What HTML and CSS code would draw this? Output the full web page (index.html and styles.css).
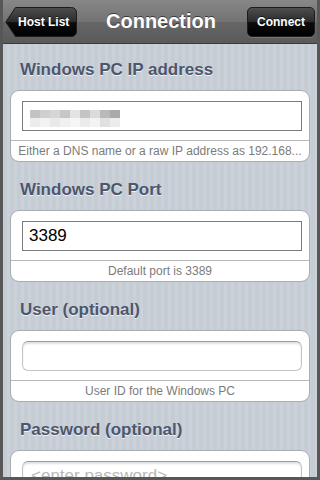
FILE: index.html
```html
<!DOCTYPE html>
<html lang="en">
<head>
  <meta charset="UTF-8" />
  <meta name="viewport" content="width=device-width, initial-scale=1.0"/>
  <title>Connection</title>
  <link rel="stylesheet" href="styles.css">
</head>
<body>

<div class="screen">
  <div class="app">

    <!-- Navigation bar -->
    <header class="navbar">
      <a class="nav-btn back" href="#">
        <svg class="back-shape" width="72" height="30" viewBox="0 0 72 30">
          <defs>
            <linearGradient id="gloss" x1="0" y1="0" x2="0" y2="1">
              <stop offset="0" stop-color="#4e4e4e"/>
              <stop offset="0.5" stop-color="#2b2b2b"/>
              <stop offset="0.52" stop-color="#0c0c0c"/>
              <stop offset="1" stop-color="#000"/>
            </linearGradient>
          </defs>
          <path d="M0.8 15 L10.5 0.5 H66.5 A5 5 0 0 1 71.5 5.5 V24.5 A5 5 0 0 1 66.5 29.5 H10.5 Z"
                fill="url(#gloss)" stroke="#1c1c1c" stroke-width="1"/>
        </svg>
        <span>Host List</span>
      </a>
      <h1>Connection</h1>
      <a class="nav-btn connect" href="#">Connect</a>
    </header>

    <main class="form">

      <!-- IP address -->
      <section class="group">
        <h2>Windows PC IP address</h2>
        <div class="card">
          <div class="field-row">
            <div class="field square">
              <div class="blur">
                <i class="c1"></i><i class="c2"></i><i class="c3"></i><i class="c4"></i><i class="c5"></i><i class="c6"></i><i class="c7"></i><i class="c8"></i><i class="c9"></i>
                <i class="d1"></i><i class="d2"></i><i class="d3"></i><i class="d4"></i><i class="d5"></i><i class="d6"></i><i class="d7"></i><i class="d8"></i><i class="d9"></i>
              </div>
            </div>
          </div>
          <div class="hint">Either a DNS name or a raw IP address as 192.168...</div>
        </div>
      </section>

      <!-- Port -->
      <section class="group">
        <h2>Windows PC Port</h2>
        <div class="card">
          <div class="field-row">
            <div class="field square">3389</div>
          </div>
          <div class="hint">Default port is 3389</div>
        </div>
      </section>

      <!-- User -->
      <section class="group">
        <h2>User (optional)</h2>
        <div class="card">
          <div class="field-row">
            <div class="field rounded"></div>
          </div>
          <div class="hint">User ID for the Windows PC</div>
        </div>
      </section>

      <!-- Password -->
      <section class="group">
        <h2>Password (optional)</h2>
        <div class="card">
          <div class="field-row">
            <div class="field rounded placeholder">&lt;enter password&gt;</div>
          </div>
        </div>
      </section>

    </main>
  </div>
</div>

</body>
</html>
```

FILE: styles.css
```css
html, body {
  margin: 0;
  padding: 0;
}

body {
  font-family: "Liberation Sans", Arial, sans-serif;
  background: #575757;
}

.screen {
  width: 320px;
  height: 480px;
  box-sizing: border-box;
  padding: 0 3px 3px 3px;
  background: #575757;
  overflow: hidden;
}

.app {
  height: 100%;
  overflow: hidden;
  display: flex;
  flex-direction: column;
}

/* Navigation bar */
.navbar {
  height: 43px;
  flex: none;
  display: grid;
  grid-template-columns: 1fr auto 1fr;
  align-items: center;
  padding: 0 0 0 2px;
  background: linear-gradient(#878787, #737373 50%, #666 51%, #5a5a5a);
  border-bottom: 1px solid #3a3a3a;
}

.navbar h1 {
  margin: 0;
  color: #fff;
  font-size: 20px;
  font-weight: bold;
  text-shadow: 0 -1px 0 rgba(0,0,0,0.55);
}

.nav-btn {
  color: #fff;
  font-size: 12px;
  font-weight: bold;
  text-decoration: none;
  height: 30px;
  line-height: 30px;
  box-sizing: border-box;
  text-shadow: 0 -1px 0 rgba(0,0,0,0.6);
}

.back {
  justify-self: start;
  position: relative;
  width: 72px;
  padding-left: 13px;
}

.back-shape {
  position: absolute;
  left: 0;
  top: 0;
}

.back span {
  position: relative;
}

.connect {
  justify-self: end;
  margin-right: 2px;
  width: 68px;
  line-height: 28px;
  text-align: center;
  border: 1px solid #1c1c1c;
  border-radius: 5px;
  background: linear-gradient(#4e4e4e, #2b2b2b 50%, #0c0c0c 52%, #000);
  box-shadow: 0 1px 0 rgba(255,255,255,0.15);
}

/* Form area */
.form {
  flex: 1;
  padding-top: 15px;
  background: repeating-linear-gradient(90deg, #c5ccd4 0 4px, #cad1d8 4px 7px);
}

.group + .group {
  margin-top: 17px;
}

.group h2 {
  margin: 0 0 10px 17px;
  font-size: 17px;
  line-height: 21px;
  font-weight: bold;
  color: #4c566c;
  text-shadow: 0 1px 0 rgba(255,255,255,0.75);
}

.card {
  margin: 0 7px;
  background: #fff;
  border: 1px solid #a9acb0;
  border-radius: 9px;
}

.field-row {
  padding: 10px 7px 9px 11px;
}

.field {
  height: 30px;
  box-sizing: border-box;
  font-size: 17px;
  line-height: 28px;
  color: #000;
  padding-left: 6px;
  background: #fff;
}

.field.square {
  border: 1px solid #7b7b7b;
}

.field.rounded {
  border: 1px solid #c4c4c4;
  border-top-color: #9c9c9c;
  border-radius: 6px;
  box-shadow: inset 0 2px 2px rgba(0,0,0,0.12);
  padding-left: 8px;
}

.field.placeholder {
  color: #b8b8b8;
}

.hint {
  height: 20px;
  line-height: 20px;
  font-size: 12px;
  color: #7b7b7b;
  text-align: center;
  white-space: nowrap;
  overflow: hidden;
  border-top: 1px solid #b9b9b9;
}

/* Pixelated (hidden) address */
.blur {
  display: grid;
  grid-template-columns: repeat(9, 10px);
  grid-template-rows: 8px 9px;
  margin-top: 8px;
  margin-left: 1px;
  width: 90px;
}

.blur i { display: block; }
.c1 { background: #c3c3c3; }
.c2 { background: #cfcfcf; }
.c3 { background: #d6d6d6; }
.c4 { background: #c6c6c6; }
.c5 { background: #e3e3e3; }
.c6 { background: #c4c4c4; }
.c7 { background: #dbdbdb; }
.c8 { background: #b9b9b9; }
.c9 { background: #a9a9a9; }
.d1 { background: #ececec; }
.d2 { background: #f2f2f2; }
.d3 { background: #e9e9e9; }
.d4 { background: #f0f0f0; }
.d5 { background: #f6f6f6; }
.d6 { background: #ebebeb; }
.d7 { background: #f3f3f3; }
.d8 { background: #e0e0e0; }
.d9 { background: #ececec; }
```
